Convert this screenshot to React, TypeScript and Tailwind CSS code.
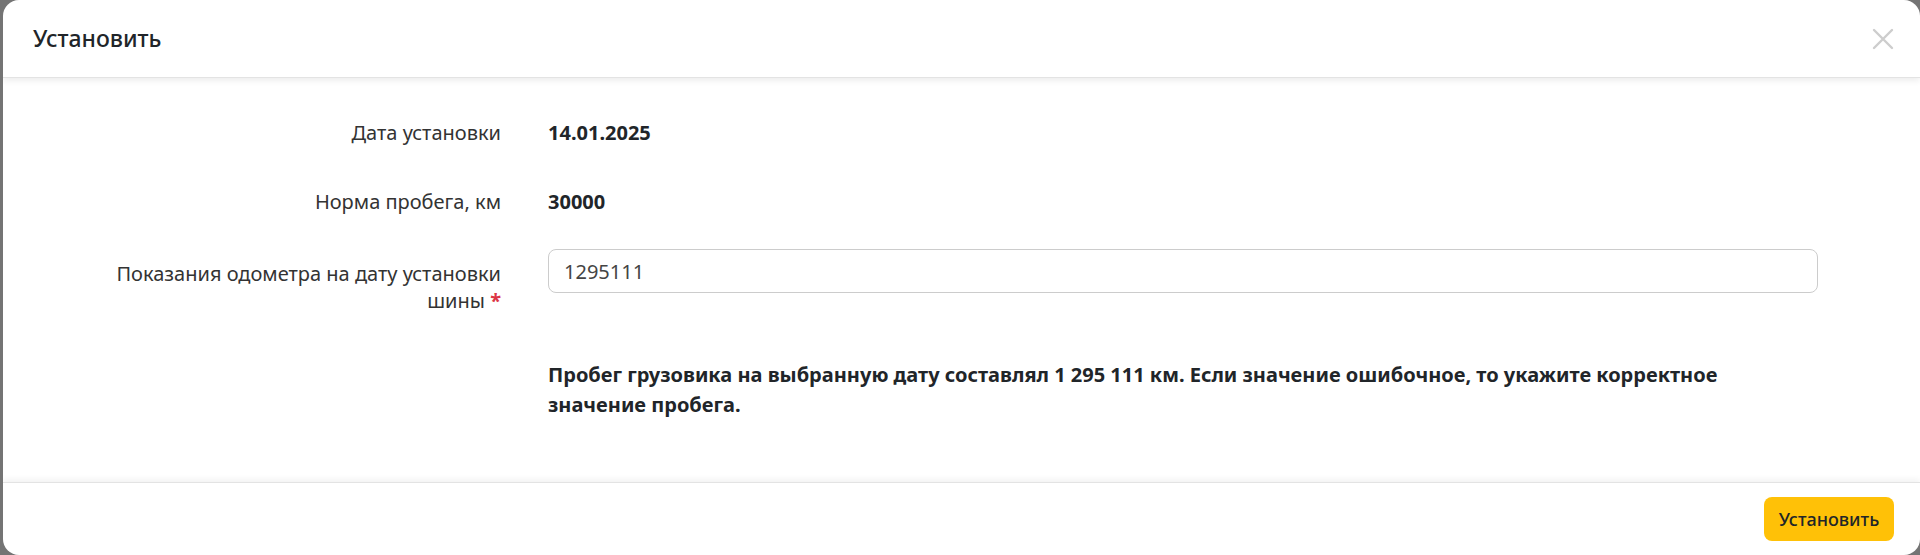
export default function App() {
    return (
        <main className="h-[555px] w-full overflow-hidden bg-[#747474] pl-[3px] font-['Noto_Sans',sans-serif]">
            <div className="flex h-[555px] w-full flex-col overflow-hidden rounded-2xl bg-white text-[#212529]">
                <header className="relative z-10 flex h-[78px] shrink-0 items-center justify-between border-b border-[#e3e3e3] pl-[30px] pr-[26px] shadow-[0_3px_6px_rgba(0,0,0,0.07)]">
                    <h1 className="text-[23px] font-medium leading-none text-[#212529]">Установить</h1>
                    <button type="button" className="flex h-[22px] w-[22px] items-center justify-center text-[#cdcdcd]">
                        <svg viewBox="0 0 22 22" className="h-[22px] w-[22px]" fill="none" stroke="currentColor" strokeWidth="2.4" strokeLinecap="round">
                            <path d="M2 2 L20 20 M20 2 L2 20" />
                        </svg>
                    </button>
                </header>

                <section className="flex-1 pt-[41px] text-[20px]">
                    <div className="flex items-center">
                        <div className="w-[498px] text-right leading-[28px] text-[#333]">Дата установки</div>
                        <div className="ml-[47px] font-bold leading-[28px]">14.01.2025</div>
                    </div>

                    <div className="mt-[41px] flex items-center">
                        <div className="w-[498px] text-right leading-[28px] text-[#333]">Норма пробега, км</div>
                        <div className="ml-[47px] font-bold leading-[28px]">30000</div>
                    </div>

                    <div className="mt-[33px] flex items-start">
                        <div className="w-[498px] pt-[11px] pl-[88px] text-right leading-[27px] text-[#333]">
                            Показания одометра на дату установки шины <span className="font-bold text-[#dc3545]">*</span>
                        </div>
                        <div className="ml-[47px] w-[1270px]">
                            <input
                                type="text"
                                defaultValue="1295111"
                                className="h-[44px] w-full rounded-lg border border-[#cccccc] px-[15px] text-[20px] text-[#444] outline-none"
                            />
                        </div>
                    </div>

                    <div className="ml-[545px] mt-[46px] w-[1270px] font-bold leading-[30px] text-[#212529]">
                        Пробег грузовика на выбранную дату составлял 1 295 111 км. Если значение ошибочное, то укажите корректное значение пробега.
                    </div>
                </section>

                <footer className="relative flex h-[73px] shrink-0 items-center justify-end border-t border-[#e3e3e3] pr-[26px] shadow-[0_-3px_6px_rgba(0,0,0,0.05)]">
                    <button type="button" className="h-[44px] w-[130px] rounded-lg bg-[#ffc107] text-[18px] font-medium text-[#212529]">
                        Установить
                    </button>
                </footer>
            </div>
        </main>
    );
}
